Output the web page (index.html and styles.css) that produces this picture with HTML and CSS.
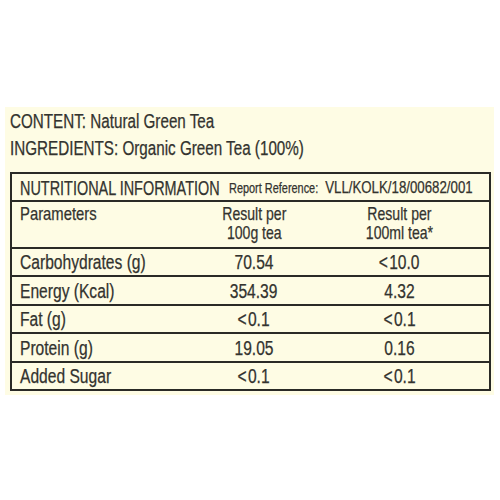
FILE: index.html
```html
<!DOCTYPE html>
<html>
<head>
<meta charset="utf-8">
<link rel="stylesheet" href="styles.css">
</head>
<body>
<div class="panel">
  <p class="line"><span class="sx">CONTENT: Natural Green Tea</span></p>
  <p class="line"><span class="sx">INGREDIENTS: Organic Green Tea (100%)</span></p>
  <div class="facts">
    <div class="head">
      <div class="title-box"><span class="sx title">NUTRITIONAL INFORMATION</span></div>
      <div class="ref-box"><span class="sx ref"><span class="ref-label">Report Reference:</span>&nbsp; <span class="ref-val">VLL/KOLK/18/00682/001</span></span></div>
    </div>
    <div class="row params">
      <div class="cell"><span class="sx">Parameters</span></div>
      <div class="cell num"><span class="sx">Result per<br>100g tea</span></div>
      <div class="cell num"><span class="sx">Result per<br>100ml tea*</span></div>
    </div>
    <div class="row short">
      <div class="cell"><span class="sx">Carbohydrates (g)</span></div>
      <div class="cell num"><span class="sx">70.54</span></div>
      <div class="cell num"><span class="sx">&lt;&#8202;10.0</span></div>
    </div>
    <div class="row">
      <div class="cell"><span class="sx">Energy (Kcal)</span></div>
      <div class="cell num"><span class="sx">354.39</span></div>
      <div class="cell num"><span class="sx">4.32</span></div>
    </div>
    <div class="row short">
      <div class="cell"><span class="sx">Fat (g)</span></div>
      <div class="cell num"><span class="sx">&lt;&#8202;0.1</span></div>
      <div class="cell num"><span class="sx">&lt;&#8202;0.1</span></div>
    </div>
    <div class="row">
      <div class="cell"><span class="sx">Protein (g)</span></div>
      <div class="cell num"><span class="sx">19.05</span></div>
      <div class="cell num"><span class="sx">0.16</span></div>
    </div>
    <div class="row short">
      <div class="cell"><span class="sx">Added Sugar</span></div>
      <div class="cell num"><span class="sx">&lt;&#8202;0.1</span></div>
      <div class="cell num"><span class="sx">&lt;&#8202;0.1</span></div>
    </div>
  </div>
</div>
</body>
</html>
```
FILE: styles.css
```css
html, body {
  margin: 0;
  padding: 0;
  background: #ffffff;
}
body {
  font-family: "Liberation Sans", Arial, sans-serif;
  color: #33332f;
  -webkit-text-stroke: 0.25px #33332f;
  overflow: hidden;
}
.panel {
  margin: 107px 0 0 5px;
  width: 489px;
  height: 288px;
  background: #fefce4;
  padding: 1px 0 0 5px;
  box-sizing: border-box;
  overflow: hidden;
}
.sx {
  display: inline-block;
  white-space: nowrap;
  transform: scaleX(0.78);
  transform-origin: left center;
}
.line {
  margin: 0;
  font-size: 19.5px;
  line-height: 27px;
  height: 27px;
}
.facts {
  margin-top: 10px;
  width: 481px;
  border: 2px solid #2a2a26;
  box-sizing: border-box;
}
.head {
  height: 26px;
  display: flex;
  align-items: center;
  justify-content: space-between;
  padding: 1px 2px 0 8px;
  box-sizing: border-box;
}
.title-box {
  width: 200px;
  flex: none;
  font-size: 19.5px;
  line-height: 24px;
}
.title {
  transform: scaleX(0.74);
}
.ref-box {
  width: 258px;
  flex: none;
  line-height: 24px;
  overflow: hidden;
}
.ref-label {
  font-size: 14px;
}
.ref-val {
  font-size: 17px;
}
.row {
  display: grid;
  grid-template-columns: 186px 112px 1fr;
  height: 29px;
  border-top: 2px solid #2a2a26;
  box-sizing: border-box;
  align-items: center;
}
.row.short {
  height: 28px;
}
.cell {
  padding-left: 8px;
  font-size: 20px;
  line-height: 20px;
}
.cell.num {
  padding-left: 0;
  text-align: center;
}
.cell.num .sx {
  transform-origin: center center;
}
.row.params {
  height: 47px;
  align-items: start;
}
.params .cell {
  padding-top: 2px;
  font-size: 19px;
  line-height: 19px;
}
.params .cell.num .sx {
  transform: scaleX(0.74);
}
```
